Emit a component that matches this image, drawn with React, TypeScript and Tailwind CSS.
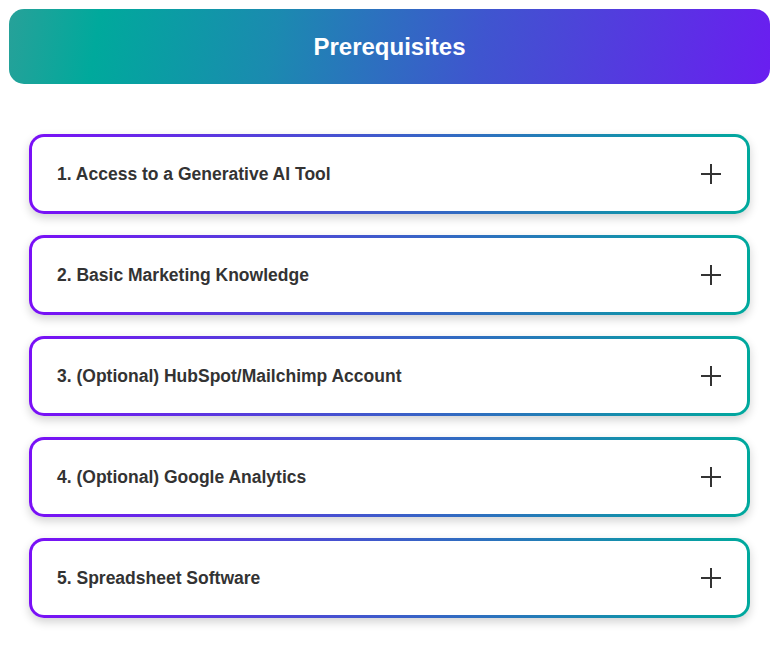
import { useState } from "react";

const items = [
  "1. Access to a Generative AI Tool",
  "2. Basic Marketing Knowledge",
  "3. (Optional) HubSpot/Mailchimp Account",
  "4. (Optional) Google Analytics",
  "5. Spreadsheet Software",
];

function PlusIcon() {
  return (
    <svg width="22" height="22" viewBox="0 0 22 22" fill="none" stroke="#333" strokeWidth="2">
      <line x1="11" y1="1" x2="11" y2="21" />
      <line x1="1" y1="11" x2="21" y2="11" />
    </svg>
  );
}

export default function App() {
  const [open, setOpen] = useState<number | null>(null);

  return (
    <div className="min-h-screen bg-white px-[9px] pt-[9px] font-[family-name:'Liberation_Sans',Arial,sans-serif]">
      {/* Header */}
      <div className="flex h-[75px] items-center justify-center rounded-[15px] bg-[linear-gradient(100deg,#27a199_0%,#00a99c_12%,#1b8ab0_35%,#3f55cf_62%,#6a1ef0_100%)]">
        <h2 className="text-[24px] font-bold text-white">Prerequisites</h2>
      </div>

      {/* Accordion */}
      <div className="mx-[20px] mt-[50px] flex flex-col gap-[21px]">
        {items.map((label, i) => (
          <div
            key={i}
            className="rounded-[15px] bg-[linear-gradient(90deg,#7a0ff7,#00a99d)] p-[3px] shadow-[0_4px_10px_rgba(0,0,0,0.18)]"
          >
            <button
              onClick={() => setOpen(open === i ? null : i)}
              className="flex h-[74px] w-full items-center justify-between rounded-[12px] bg-white px-[25px] text-left"
            >
              <span className="pt-[1px] text-[17.5px] font-bold text-[#333]">{label}</span>
              <PlusIcon />
            </button>
          </div>
        ))}
      </div>
    </div>
  );
}
